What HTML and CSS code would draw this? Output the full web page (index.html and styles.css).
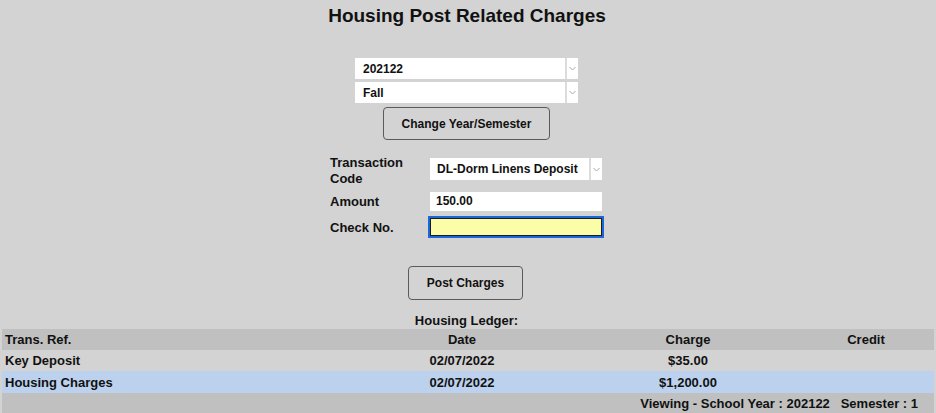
FILE: index.html
```html
<!DOCTYPE html>
<html>
<head>
<meta charset="utf-8">
<link rel="stylesheet" href="styles.css">
</head>
<body>
<h1 class="title">Housing Post Related Charges</h1>

<div class="term">
  <div class="select wide">
    <span class="value">202122</span>
    <span class="arrow"><svg width="7" height="5" viewBox="0 0 7 5"><path d="M0.5 1 L3.5 4 L6.5 1" fill="none" stroke="#a8a8a8" stroke-width="1"/></svg></span>
  </div>
  <div class="select wide">
    <span class="value">Fall</span>
    <span class="arrow"><svg width="7" height="5" viewBox="0 0 7 5"><path d="M0.5 1 L3.5 4 L6.5 1" fill="none" stroke="#a8a8a8" stroke-width="1"/></svg></span>
  </div>
  <button class="btn btn-term">Change Year/Semester</button>
</div>

<div class="form">
  <div class="row row-code">
    <div class="label">Transaction<br>Code</div>
    <div class="select code">
      <span class="value">DL-Dorm Linens Deposit</span>
      <span class="arrow"><svg width="7" height="5" viewBox="0 0 7 5"><path d="M0.5 1 L3.5 4 L6.5 1" fill="none" stroke="#a8a8a8" stroke-width="1"/></svg></span>
    </div>
  </div>
  <div class="row row-amount">
    <div class="label">Amount</div>
    <div class="input">150.00</div>
  </div>
  <div class="row row-check">
    <div class="label">Check No.</div>
    <div class="input focus"></div>
  </div>
</div>

<div class="post">
  <button class="btn btn-post">Post Charges</button>
</div>

<div class="ledger-title">Housing Ledger:</div>
<table class="ledger">
  <thead>
    <tr class="head">
      <th class="c1">Trans. Ref.</th>
      <th class="c2">Date</th>
      <th class="c3">Charge</th>
      <th class="c4">Credit</th>
    </tr>
  </thead>
  <tbody>
    <tr class="plain">
      <td class="c1">Key Deposit</td>
      <td class="c2">02/07/2022</td>
      <td class="c3">$35.00</td>
      <td class="c4"></td>
    </tr>
    <tr class="alt">
      <td class="c1">Housing Charges</td>
      <td class="c2">02/07/2022</td>
      <td class="c3">$1,200.00</td>
      <td class="c4"></td>
    </tr>
    <tr class="foot">
      <td colspan="4">Viewing - School Year : 202122&nbsp;&nbsp;&nbsp;Semester : 1</td>
    </tr>
  </tbody>
</table>
</body>
</html>
```
FILE: styles.css
```css
* { box-sizing: border-box; }
html, body {
  margin: 0;
  padding: 0;
  background: #d3d3d3;
  font-family: "Liberation Sans", Arial, sans-serif;
  font-weight: bold;
  color: #111;
  font-size: 13px;
}
.title {
  margin: 0;
  padding-top: 3px;
  font-size: 19px;
  line-height: 26px;
  text-align: center;
  color: #111;
  position: relative;
  left: -1px;
}
.term {
  margin-top: 29px;
  display: flex;
  flex-direction: column;
  align-items: center;
  gap: 3px;
}
.select {
  display: flex;
  background: #fff;
  height: 21px;
}
.select.wide { width: 223px; margin-left: -3px; }
.select .value {
  flex: 1;
  padding-left: 8px;
  line-height: 22px;
  font-size: 12px;
}
.select .arrow {
  width: 13px;
  border-left: 2px solid #dcdcdc;
  display: flex;
  align-items: center;
  justify-content: center;
}
.btn {
  font-family: inherit;
  font-weight: bold;
  font-size: 12px;
  color: #111;
  background: #d3d3d3;
  border: 1px solid #5a5a5a;
  border-radius: 4px;
  padding: 0;
}
.btn-term {
  width: 167px;
  height: 33px;
  margin-top: 1px;
  margin-left: -3px;
}
.form {
  margin: 15px auto 0;
  width: 274px;
  display: flex;
  flex-direction: column;
  position: relative;
  left: -1px;
}
.row {
  display: flex;
  align-items: center;
}
.label {
  width: 100px;
  font-size: 13px;
  line-height: 16px;
}
.row-code { height: 32px; align-items: flex-start; }
.row-code .select.code { width: 172px; height: 22px; margin-top: 3px; }
.select.code .value { line-height: 23px; font-size: 12px; padding-left: 7px; }
.row-amount { margin-top: 5px; height: 19px; }
.input {
  width: 172px;
  height: 19px;
  background: #fff;
  font-size: 12px;
  line-height: 19px;
  padding-left: 6px;
}
.row-check { margin-top: 5px; height: 22px; }
.row-check .label { padding-top: 1px; }
.input.focus {
  width: 176px;
  height: 22px;
  margin-left: -2px;
  background: #fbfda8;
  border: 2px solid #1a66dd;
  box-shadow: inset 0 0 0 1px #1c1c1c;
}
.post {
  margin-top: 28px;
  display: flex;
  justify-content: center;
}
.btn-post {
  width: 115px;
  height: 34px;
  margin-left: -5px;
}
.ledger-title {
  margin-top: 12px;
  text-align: center;
  line-height: 17px;
  font-size: 13px;
  margin-left: -3px;
}
.ledger {
  margin: 0 2px;
  width: 932px;
  border-collapse: collapse;
  table-layout: fixed;
  font-size: 13px;
}
.ledger th, .ledger td {
  padding: 0;
  font-weight: bold;
}
.head { background: #c0c0c0; height: 21px; }
.plain { background: #d3d3d3; height: 21px; }
.alt { background: #bbd1ee; height: 22px; }
.foot { background: #c0c0c0; height: 21px; }
.c1 { width: 344px; text-align: left; padding-left: 3px !important; }
.c2 { width: 232px; text-align: center; }
.c3 { width: 220px; text-align: center; }
.c4 { width: 136px; text-align: center; }
.foot td { text-align: right; padding-right: 16px !important; }
```
